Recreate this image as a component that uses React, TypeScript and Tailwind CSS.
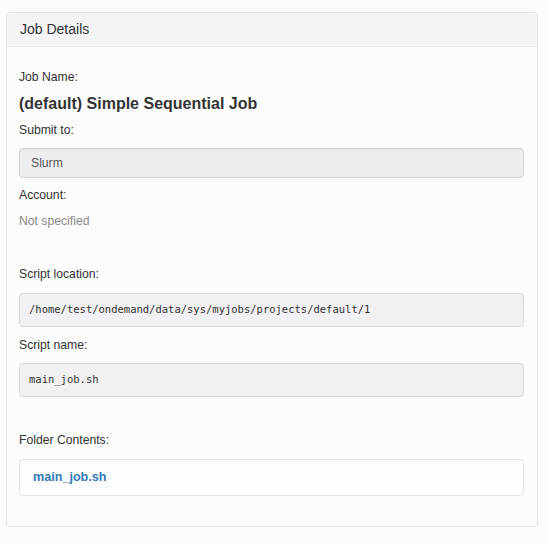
export default function App() {
  const label = "text-[12.2px] leading-[18px] text-[#333]";
  const mono = "font-['DejaVu_Sans_Mono','Liberation_Mono',monospace] text-[10.5px] text-[#333]";
  return (
    <div className="w-[548px] h-[544px] bg-[#fdfcfd] pt-[12px] pl-[6px] font-['Liberation_Sans',Arial,sans-serif]">
      <div className="w-[532px] border border-[#e4e3e5] rounded-[4px] bg-[#fdfcfd]">
        <div className="h-[34px] bg-[#f4f3f5] border-b border-[#e6e5e7] rounded-t-[4px] pl-[13px] flex items-center text-[14px] text-[#333]">
          Job Details
        </div>
        <div className="pl-[12px] pr-[13px] pt-[21px] pb-[30px]">
          <div className={label}>Job Name:</div>
          <div className="mt-[7px] text-[16px] leading-[22px] font-bold text-[#333]">(default) Simple Sequential Job</div>
          <div className={`mt-[6px] ${label}`}>Submit to:</div>
          <div className="mt-[9px] h-[30px] bg-[#eeedef] border border-[#d4d3d5] rounded-[4px] pl-[11px] flex items-center text-[12.2px] text-[#555] shadow-[inset_0_1px_1px_rgba(0,0,0,0.05)]">
            Slurm
          </div>
          <div className={`mt-[8px] ${label}`}>Account:</div>
          <div className="mt-[8px] text-[12.2px] leading-[18px] text-[#888]">Not specified</div>
          <div className={`mt-[35px] ${label}`}>Script location:</div>
          <div className={`mt-[10px] h-[34px] bg-[#f1f0f2] border border-[#d9d8da] rounded-[4px] pl-[9px] flex items-center ${mono}`}>
            /home/test/ondemand/data/sys/myjobs/projects/default/1
          </div>
          <div className={`mt-[9px] ${label}`}>Script name:</div>
          <div className={`mt-[9px] h-[34px] bg-[#f1f0f2] border border-[#d9d8da] rounded-[4px] pl-[9px] flex items-center ${mono}`}>
            main_job.sh
          </div>
          <div className={`mt-[34px] ${label}`}>Folder Contents:</div>
          <div className="mt-[10px] h-[37px] bg-[#fefdfe] border border-[#e6e5e7] rounded-[4px] pl-[13px] flex items-center">
            <a className="text-[12.6px] font-bold text-[#337ab7]">main_job.sh</a>
          </div>
        </div>
      </div>
    </div>
  );
}
